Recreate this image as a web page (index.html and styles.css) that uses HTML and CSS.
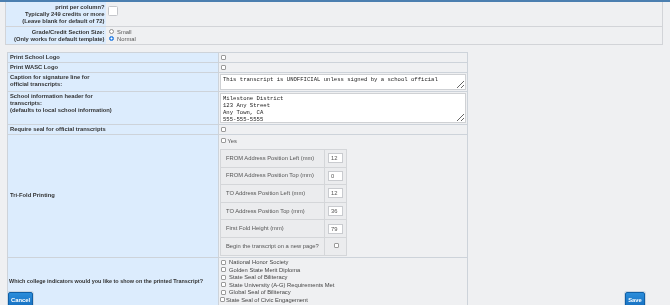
FILE: index.html
```html
<!DOCTYPE html>
<html>
<head>
<meta charset="utf-8">
<link rel="stylesheet" href="styles.css">
</head>
<body>
<div class="topbar"></div>
<table class="top">
  <tr>
    <th class="tlbl">Maximum number of courses to<br>print per column?<br>Typically 249 credits or more<br>(Leave blank for default of 72)</th>
    <td class="tval"><input class="box" type="text"></td>
  </tr>
  <tr>
    <th class="tlbl">Grade/Credit Section Size:<br>(Only works for default template)</th>
    <td class="tval">
      <label class="opt"><input class="rd" type="radio" name="sz"> Small</label>
      <label class="opt"><input class="rd" type="radio" name="sz" checked> Normal</label>
    </td>
  </tr>
</table>

<table class="main">
  <tr><th class="lbl">Print School Logo</th><td class="val"><input class="cb" type="checkbox"></td></tr>
  <tr><th class="lbl">Print WASC Logo</th><td class="val"><input class="cb" type="checkbox"></td></tr>
  <tr><th class="lbl">Caption for signature line for<br>official transcripts:</th><td class="val"><textarea class="ta ta1">This transcript is UNOFFICIAL unless signed by a school official</textarea></td></tr>
  <tr><th class="lbl">School information header for<br>transcripts:<br>(defaults to local school information)</th><td class="val"><textarea class="ta ta2">Milestone District
123 Any Street
Any Town, CA
555-555-5555</textarea></td></tr>
  <tr><th class="lbl">Require seal for official transcripts</th><td class="val"><input class="cb" type="checkbox"></td></tr>
  <tr>
    <th class="lbl mid">Tri-Fold Printing</th>
    <td class="val">
      <label class="yes"><input class="cb" type="checkbox"> Yes</label>
      <table class="fold">
        <tr><td class="fl">FROM Address Position Left (mm)</td><td class="fv"><input class="num" type="text" value="12"></td></tr>
        <tr><td class="fl">FROM Address Position Top (mm)</td><td class="fv"><input class="num" type="text" value="0"></td></tr>
        <tr><td class="fl">TO Address Position Left (mm)</td><td class="fv"><input class="num" type="text" value="12"></td></tr>
        <tr><td class="fl">TO Address Position Top (mm)</td><td class="fv"><input class="num" type="text" value="36"></td></tr>
        <tr><td class="fl">First Fold Height (mm)</td><td class="fv"><input class="num" type="text" value="79"></td></tr>
        <tr><td class="fl">Begin the transcript on a new page?</td><td class="fv"><input class="cb cbf" type="checkbox"></td></tr>
      </table>
    </td>
  </tr>
  <tr>
    <th class="lbl mid one">Which college indicators would you like to show on the printed Transcript?</th>
    <td class="val list">
      <label class="item"><input class="cb" type="checkbox"> National Honor Society</label>
      <label class="item"><input class="cb" type="checkbox"> Golden State Merit Diploma</label>
      <label class="item"><input class="cb" type="checkbox"> State Seal of Biliteracy</label>
      <label class="item"><input class="cb" type="checkbox"> State University (A-G) Requirements Met</label>
      <label class="item"><input class="cb" type="checkbox"> Global Seal of Biliteracy</label>
      <label class="item tight"><input class="cb" type="checkbox">State Seal of Civic Engagement</label>
    </td>
  </tr>
</table>

<button class="btn cancel" type="button">Cancel</button>
<button class="btn save" type="button">Save</button>
</body>
</html>
```

FILE: styles.css
```css
* { box-sizing: border-box; }
html, body { margin: 0; padding: 0; }
body {
  width: 670px;
  height: 305px;
  overflow: hidden;
  background: #eff0f2;
  font-family: "Liberation Sans", Arial, sans-serif;
  font-size: 5.8px;
  color: #4a4a4a;
}
.topbar {
  position: fixed;
  top: 0; left: 0; right: 0;
  height: 1.5px;
  background: #4b7fb0;
  z-index: 5;
}

/* top settings table */
.top {
  margin: -6px 0 0 5px;
  width: 658px;
  border-collapse: collapse;
  border: 1px solid #d2d4d8;
}
.top tr { border-bottom: 1px solid #d2d4d8; }
.tlbl {
  width: 100px;
  background: #dcecfd;
  text-align: right;
  font-weight: bold;
  color: #333;
  line-height: 7px;
  padding: 1.5px 1px 1.5px 2px;
  white-space: nowrap;
  vertical-align: middle;
}
.tval {
  padding: 0 2px;
  vertical-align: middle;
  line-height: 7px;
}
.box {
  display: block;
  width: 10px; height: 10px;
  border: 1px solid #c4c6ca;
  border-radius: 1.5px;
  background: #fff;
  margin: 0;
  padding: 0;
}
.opt { display: block; color: #555; }
.rd {
  appearance: none;
  -webkit-appearance: none;
  width: 5.5px; height: 5.5px;
  margin: 0 1.5px 0 1px;
  border: 0.7px solid #8e8e8e;
  border-radius: 50%;
  background: #fff;
  vertical-align: -0.8px;
}
.rd:checked {
  border-color: #2b7fe0;
  background: radial-gradient(circle, #fff 0 0.9px, #2f86ea 1.1px);
}

/* main table */
.main {
  margin: 7px 0 0 7px;
  width: 461px;
  border-collapse: collapse;
  border: 1px solid #cdd3da;
}
.main > tbody > tr { border-bottom: 1px solid #cdd3da; }
.lbl {
  width: 212px;
  background: #dcecfd;
  text-align: left;
  font-weight: bold;
  color: #333;
  line-height: 7px;
  padding: 1px 2px;
  vertical-align: top;
  border-right: 1px solid #cdd3da;
}
.lbl.mid { vertical-align: middle; }
.lbl.one { white-space: nowrap; font-size: 5.45px; padding-left: 1px; }
.val {
  padding: 1px 1px;
  vertical-align: top;
  line-height: 7px;
}
.cb {
  appearance: none;
  -webkit-appearance: none;
  width: 5px; height: 5px;
  margin: 0 0 0 1px;
  border: 0.7px solid #9a9a9a;
  border-radius: 1px;
  background: #fff;
  vertical-align: -0.5px;
}
.ta {
  display: block;
  width: 246px;
  margin: 0;
  padding: 1px 2px;
  border: 1px solid #cfd1d4;
  background: #fff;
  font-family: "Liberation Mono", "Courier New", monospace;
  font-size: 5.6px;
  line-height: 7px;
  color: #222;
  resize: vertical;
}
.ta1 { height: 16px; }
.ta2 { height: 30px; }

.yes { display: block; padding: 1.5px 0; color: #555; }

.fold {
  margin: 3px 0 0 0;
  border-collapse: collapse;
  width: 127px;
}
.fold td {
  border: 1px solid #d4d6d9;
  background: #ebecee;
  height: 17.6px;
  vertical-align: middle;
  color: #555;
  line-height: 7px;
}
.fl { width: 105px; padding: 0 4px 0 5px; white-space: nowrap; }
.fv { width: 22px; padding: 0 3px; }
.num {
  display: block;
  width: 15px; height: 10px;
  margin: 0;
  padding: 0 2px;
  border: 1px solid #c9cbcf;
  background: #fff;
  font-family: "Liberation Sans", Arial, sans-serif;
  font-size: 5.8px;
  color: #555;
}
.cbf { margin-left: 6px; }

.list { padding-top: 1.5px; padding-bottom: 2px; }
.item { display: block; line-height: 7.5px; color: #444; white-space: nowrap; }
.item .cb { margin-right: 1.5px; }
.item.tight .cb { margin-right: 1px; margin-left: 0; }

.btn {
  position: fixed;
  bottom: -3px;
  height: 16px;
  padding: 0;
  border: 1px solid #0f5fa6;
  border-radius: 2px;
  background: linear-gradient(#2a8ddb, #166fc0);
  box-shadow: 0 0 0 1px #c9d5e1;
  color: #fff;
  font-family: "Liberation Sans", Arial, sans-serif;
  font-weight: bold;
  font-size: 5.8px;
  line-height: 12px;
  text-align: center;
  z-index: 6;
}
.cancel { left: 8px; width: 25px; }
.save { left: 625px; width: 20px; }
```
